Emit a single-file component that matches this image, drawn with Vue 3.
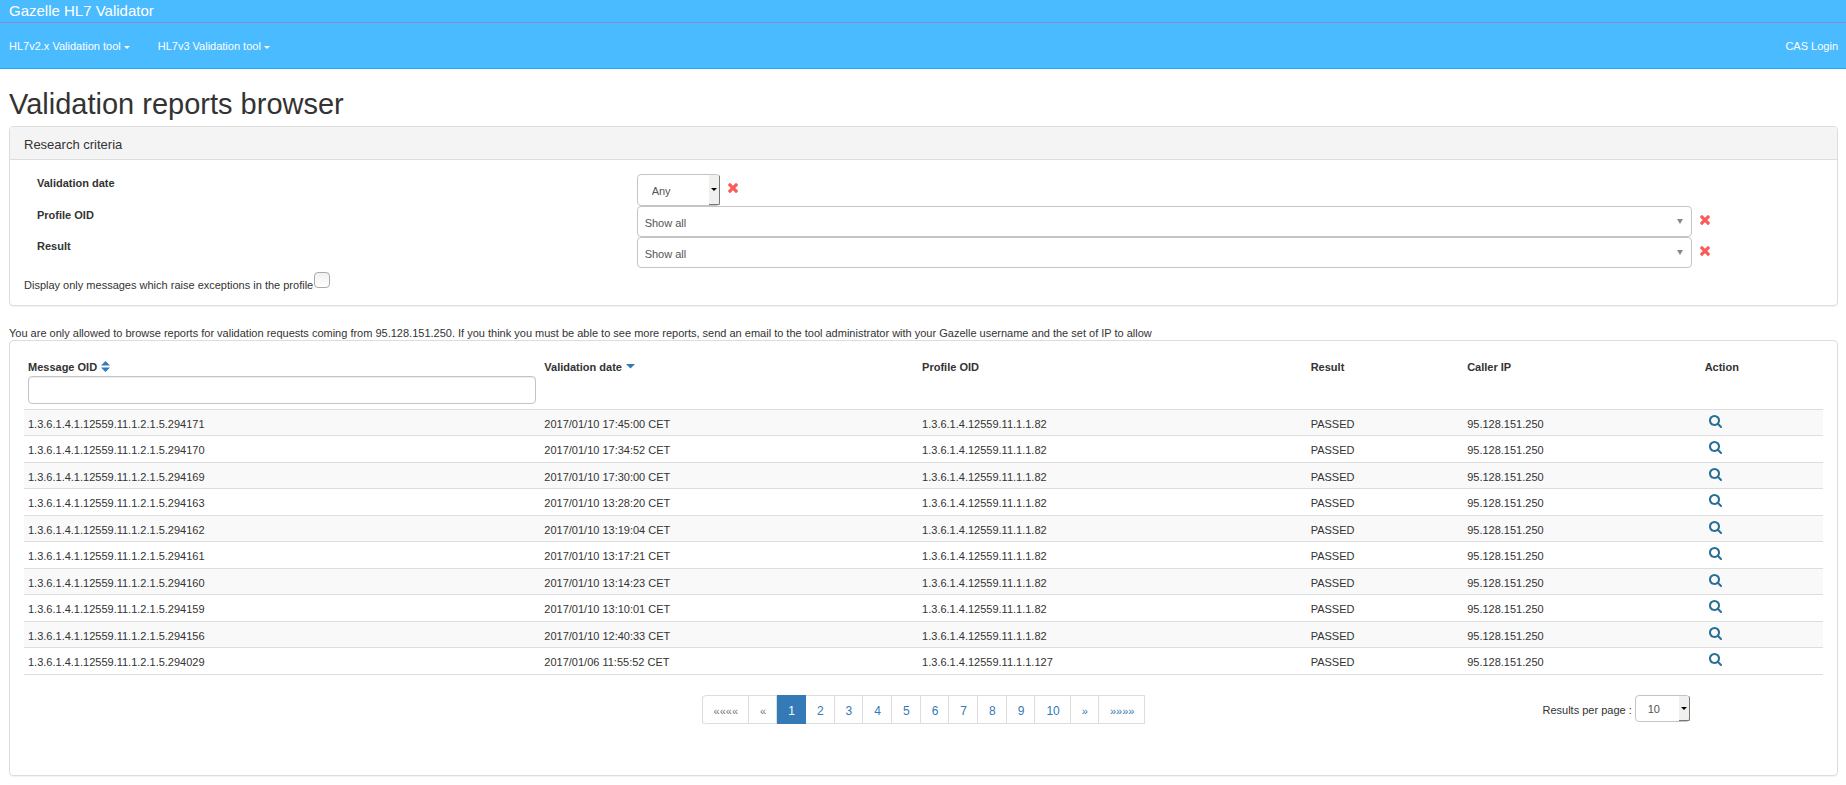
<script setup>
import { ref } from 'vue'

const validationDate = ref('Any')
const profileOid = ref('Show all')
const result = ref('Show all')
const onlyExceptions = ref(false)
const messageOid = ref('')
const perPage = ref('10')

const menus = ['HL7v2.x Validation tool', 'HL7v3 Validation tool']

const reports = [
  ['294171', '2017/01/10 17:45:00 CET', '82'],
  ['294170', '2017/01/10 17:34:52 CET', '82'],
  ['294169', '2017/01/10 17:30:00 CET', '82'],
  ['294163', '2017/01/10 13:28:20 CET', '82'],
  ['294162', '2017/01/10 13:19:04 CET', '82'],
  ['294161', '2017/01/10 13:17:21 CET', '82'],
  ['294160', '2017/01/10 13:14:23 CET', '82'],
  ['294159', '2017/01/10 13:10:01 CET', '82'],
  ['294156', '2017/01/10 12:40:33 CET', '82'],
  ['294029', '2017/01/06 11:55:52 CET', '127'],
].map(([id, date, profile]) => ({
  oid: `1.3.6.1.4.1.12559.11.1.2.1.5.${id}`,
  date,
  profile: `1.3.6.1.4.12559.11.1.1.${profile}`,
  result: 'PASSED',
  ip: '95.128.151.250',
}))

const pages = ['1', '2', '3', '4', '5', '6', '7', '8', '9', '10']
const crossPath =
  'M1490 1322q0 40-28 68l-136 136q-28 28-68 28t-68-28l-294-294-294 294q-28 28-68 28t-68-28l-136-136q-28-28-28-68t28-68l294-294-294-294q-28-28-28-68t28-68l136-136q28-28 68-28t68 28l294 294 294-294q28-28 68-28t68 28l136 136q28 28 28 68t-28 68l-294 294 294 294q28 28 28 68z'
const searchPath =
  'M1152 832q0-185-131.5-316.5T704 384 387.5 515.5 256 832t131.5 316.5T704 1280t316.5-131.5T1152 832zm512 832q0 54-38 91t-90 37q-54 0-90-38l-343-342q-179 124-399 124-143 0-273.5-55.5t-225-150-150-225T0 832t55.5-273.5 150-225 225-150T704 128t273.5 55.5 225 150 150 225T1408 832q0 220-124 399l343 343q37 37 37 90z'
</script>

<template>
  <div class="page">
    <header>
      <div class="brand"><a href="#">Gazelle HL7 Validator</a></div>
      <nav class="nav">
        <a v-for="m in menus" :key="m" href="#">{{ m }}<span class="caret"></span></a>
        <a href="#" class="login">CAS Login</a>
      </nav>
    </header>

    <main>
      <h1>Validation reports browser</h1>

      <section class="panel">
        <h2 class="panel-title">Research criteria</h2>
        <form class="criteria" @submit.prevent>
          <div class="field field-date">
            <label for="date">Validation date</label>
            <div class="control">
              <span class="native date-select">
                <select id="date" v-model="validationDate">
                  <option>Any</option>
                </select>
                <span class="drop"></span>
              </span>
              <button type="button" class="clear" aria-label="Reset validation date">
                <svg viewBox="302 366 1188 1188"><path :d="crossPath" /></svg>
              </button>
            </div>
          </div>
          <div class="field">
            <label for="profile">Profile OID</label>
            <div class="control">
              <span class="wide">
                <select id="profile" v-model="profileOid">
                  <option>Show all</option>
                </select>
                <span class="arrow"></span>
              </span>
              <button type="button" class="clear" aria-label="Reset profile OID">
                <svg viewBox="302 366 1188 1188"><path :d="crossPath" /></svg>
              </button>
            </div>
          </div>
          <div class="field">
            <label for="result">Result</label>
            <div class="control">
              <span class="wide">
                <select id="result" v-model="result">
                  <option>Show all</option>
                </select>
                <span class="arrow"></span>
              </span>
              <button type="button" class="clear" aria-label="Reset result">
                <svg viewBox="302 366 1188 1188"><path :d="crossPath" /></svg>
              </button>
            </div>
          </div>
          <div class="exceptions">
            <label for="exceptions">Display only messages which raise exceptions in the profile</label>
            <input id="exceptions" v-model="onlyExceptions" type="checkbox" />
          </div>
        </form>
      </section>

      <p class="notice">
        You are only allowed to browse reports for validation requests coming from 95.128.151.250. If you think you must be able to see more reports, send an email to the tool administrator with your Gazelle username and the set of IP to allow
      </p>

      <section class="panel results">
        <table>
          <colgroup>
            <col class="c-oid" /><col class="c-date" /><col class="c-profile" />
            <col class="c-result" /><col class="c-ip" /><col class="c-action" />
          </colgroup>
          <thead>
            <tr>
              <th scope="col">
                <label for="oid">Message OID</label>
                <svg class="sort" viewBox="0 0 9 11"><path d="M4.500 0L9 4.500H0zM0 6.500H9L4.500 11z" /></svg>
                <input id="oid" v-model="messageOid" type="text" />
              </th>
              <th scope="col">
                <span>Validation date</span>
                <svg class="sort" viewBox="0 0 9 11"><path d="M0 3H9L4.500 7.500z" /></svg>
              </th>
              <th scope="col">Profile OID</th>
              <th scope="col">Result</th>
              <th scope="col">Caller IP</th>
              <th scope="col">Action</th>
            </tr>
          </thead>
          <tbody>
            <tr v-for="r in reports" :key="r.oid">
              <td>{{ r.oid }}</td>
              <td>{{ r.date }}</td>
              <td>{{ r.profile }}</td>
              <td>{{ r.result }}</td>
              <td>{{ r.ip }}</td>
              <td class="action">
                <a href="#" aria-label="View report">
                  <svg viewBox="0 128 1664 1664"><path :d="searchPath" /></svg>
                </a>
              </td>
            </tr>
          </tbody>
        </table>

        <div class="footer">
          <ul class="pagination">
            <li><a class="quote off" href="#">««««</a></li>
            <li><a class="quote off" href="#">«</a></li>
            <li v-for="p in pages" :key="p"><a href="#" :class="{ active: p === '1' }">{{ p }}</a></li>
            <li><a class="quote" href="#">»</a></li>
            <li><a class="quote" href="#">»»»»</a></li>
          </ul>
          <div class="per-page">
            <label for="per-page">Results per page :</label>
            <span class="native page-select">
              <select id="per-page" v-model="perPage">
                <option>10</option>
              </select>
              <span class="drop"></span>
            </span>
          </div>
        </div>
      </section>
    </main>
  </div>
</template>

<style>
body {
  margin: 0;
  background: #fff;
}
</style>

<style scoped>
.page,
.page * {
  box-sizing: border-box;
}
.page {
  font: 11px/17px "Liberation Sans", Arial, sans-serif;
  color: #333;
}
a {
  text-decoration: none;
}
input,
select,
button {
  font: inherit;
  margin: 0;
}
header {
  background: #4abbff;
  border-bottom: 1px solid #1faaff;
}
header a {
  color: #fff;
}
.brand {
  padding: 0 9px;
  border-bottom: 1px solid #7d90cc;
  font-size: 15px;
  line-height: 22px;
}
.nav {
  display: flex;
  align-items: center;
  gap: 28px;
  height: 45px;
  padding: 2px 8px 0 9px;
}
.nav .login {
  margin-left: auto;
}
.caret {
  display: inline-block;
  margin-left: 3px;
  vertical-align: middle;
  border: 3px solid transparent;
  border-top-color: #fff;
  border-bottom: 0;
}
main {
  padding: 0 8px 10px 9px;
}
h1 {
  margin: 19px 0 5px;
  font-size: 29px;
  line-height: 33px;
  font-weight: 400;
}
.panel {
  border: 1px solid #ddd;
  border-radius: 4px;
  box-shadow: 0 1px 1px rgba(0, 0, 0, 0.05);
}
.panel-title {
  margin: 0;
  padding: 9px 14px 6px;
  background: #f4f4f4;
  border-bottom: 1px solid #ddd;
  border-radius: 3px 3px 0 0;
  font-size: 13px;
  line-height: 17px;
  font-weight: 400;
}
.criteria {
  padding: 14px 14px 11px;
}
.field {
  display: grid;
  grid-template-columns: 1fr 2fr;
  height: 31px;
}
.field-date {
  height: 32px;
}
.field label {
  padding-left: 13px;
  line-height: 19px;
  font-weight: 700;
}
.control {
  display: flex;
  padding: 0 14px 0 13px;
}
.native,
.wide {
  position: relative;
  display: block;
}
select {
  display: block;
  width: 100%;
  appearance: none;
  border: 1px solid #c4c4c4;
  border-radius: 4px;
  background: #fff;
  color: #555;
}
.date-select {
  width: 83px;
}
.date-select select {
  height: 32px;
  padding: 3px 14px 0;
}
.wide {
  width: 90%;
}
.wide select {
  height: 31px;
  padding: 3px 7px 0;
}
.drop {
  position: absolute;
  top: 1px;
  right: 0;
  bottom: 1px;
  width: 11px;
  display: flex;
  align-items: center;
  justify-content: center;
  background: #f0f0ee;
  border-right: 1px solid #777;
  border-bottom: 1px solid #777;
  border-radius: 0 2px 2px 0;
  pointer-events: none;
}
.drop::after {
  content: "";
  border: 3px solid transparent;
  border-top-color: #000;
  border-bottom: 0;
}
.arrow {
  position: absolute;
  top: 13px;
  right: 9px;
  border: 3px solid transparent;
  border-top: 5px solid #888;
  border-bottom: 0;
  pointer-events: none;
}
.clear {
  align-self: flex-start;
  display: flex;
  margin: 9px 0 0 8px;
  padding: 0;
  border: 0;
  background: none;
}
.clear svg {
  width: 10px;
  height: 10px;
  fill: #fc5a5a;
}
.exceptions {
  display: flex;
  margin-top: 4px;
}
.exceptions label {
  padding-top: 5px;
}
.exceptions input {
  width: 16px;
  height: 16px;
  margin-left: 1px;
  appearance: none;
  border: 1px solid #aaa;
  border-radius: 4px;
  background: linear-gradient(#f0f0f0, #fff);
}
.notice {
  margin: 20px 0 0;
  line-height: 14px;
}
.results {
  padding: 14px 14px 50px;
}
table {
  width: 100%;
  table-layout: fixed;
  border-collapse: separate;
  border-spacing: 0;
  border-bottom: 1px solid #ddd;
}
.c-oid {
  width: 28.7%;
}
.c-date {
  width: 21%;
}
.c-profile {
  width: 21.6%;
}
.c-result {
  width: 8.7%;
}
.c-ip {
  width: 13.2%;
}
.c-action {
  width: 6.8%;
}
th {
  padding: 4px 4px 5px;
  text-align: left;
  vertical-align: top;
  font-weight: 700;
}
th input {
  display: block;
  width: 100%;
  height: 28px;
  padding: 0 8px;
  border: 1px solid #c4c4c4;
  border-radius: 4px;
  box-shadow: inset 0 1px 1px rgba(0, 0, 0, 0.075);
}
.sort {
  width: 9px;
  height: 11px;
  margin-left: 4px;
  vertical-align: -1px;
  fill: #337ab7;
}
td {
  height: 26px;
  padding: 3px 4px 0;
  border-top: 1px solid #ddd;
}
tr:nth-child(even) td {
  height: 27px;
}
tbody tr:nth-child(odd) {
  background: #f9f9f9;
}
td.action {
  padding: 0 8px 3px;
}
.action a {
  display: flex;
}
.action svg {
  width: 13px;
  height: 13px;
  fill: #286f95;
}
.footer {
  display: grid;
  grid-template-columns: 23% 54% 23%;
  margin-top: 20px;
}
.pagination {
  grid-column: 2;
  justify-self: center;
  display: flex;
  margin: 0;
  padding: 0;
  list-style: none;
  border-left: 1px solid #ddd;
  border-radius: 4px 0 0 4px;
}
.pagination a {
  display: block;
  height: 29px;
  padding: 0 10px 0 11px;
  border: 1px solid #ddd;
  border-left: 0;
  font-size: 12px;
  line-height: 30px;
  color: #337ab7;
}
.pagination li:first-child a {
  border-radius: 4px 0 0 4px;
}
.pagination .quote {
  font-size: 11px;
}
.pagination .off {
  color: #777;
}
.pagination .active {
  background: #337ab7;
  border-color: #337ab7;
  color: #fff;
}
.per-page {
  display: flex;
  align-items: flex-start;
  justify-content: center;
  gap: 3px;
}
.per-page label {
  line-height: 30px;
}
.page-select {
  width: 55px;
}
.page-select select {
  height: 27px;
  padding: 2px 12px 0;
}
</style>
